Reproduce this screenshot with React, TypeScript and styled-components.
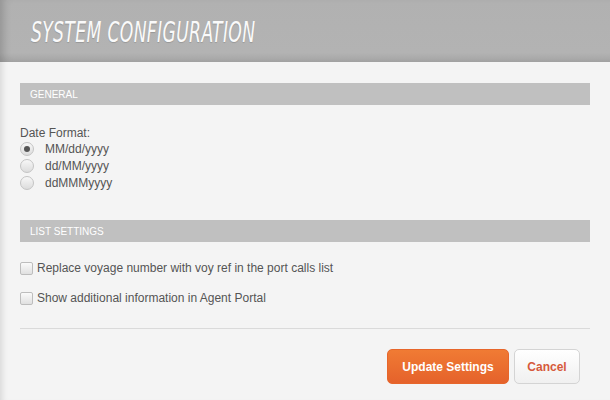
import React, { useState } from 'react';
import styled, { createGlobalStyle } from 'styled-components';

const GlobalStyle = createGlobalStyle`
  html, body {
    margin: 0;
    padding: 0;
    background: #f4f4f4;
  }
  body {
    font-family: "Liberation Sans", Arial, sans-serif;
  }
`;

const Page = styled.div`
  width: 610px;
  height: 400px;
  background: #f4f4f4;
  box-shadow: inset 7px 0 6px -5px rgba(0, 0, 0, 0.12);
  overflow: hidden;
`;

const Header = styled.div`
  height: 62px;
  background: linear-gradient(to bottom, #b1b1b1 0%, #b3b3b3 85%, #a4a4a4 100%);
  box-shadow: inset 8px 0 8px -5px rgba(0, 0, 0, 0.18);
  display: flex;
  align-items: center;
  padding-left: 31px;
  box-sizing: border-box;
`;

const Title = styled.h1`
  margin: 0;
  font-family: "DejaVu Sans Condensed", "Liberation Sans", sans-serif;
  font-style: italic;
  font-weight: normal;
  font-size: 29px;
  letter-spacing: 0.5px;
  color: #fafafa;
  text-shadow: 0 1px 1px rgba(0, 0, 0, 0.15);
  transform: scaleX(0.66);
  transform-origin: left center;
  white-space: nowrap;
  margin-top: 2px;
`;

const Content = styled.div`
  padding: 21px 20px 0 20px;
`;

const SectionBar = styled.div`
  height: 22px;
  background: #c0c0c0;
  color: #fff;
  font-size: 10px;
  text-transform: uppercase;
  display: flex;
  align-items: center;
  padding-left: 10px;
`;

const FieldLabel = styled.div`
  margin-top: 21px;
  font-size: 12px;
  color: #555;
  line-height: 14px;
`;

const RadioList = styled.div`
  display: flex;
  flex-direction: column;
  gap: 3px;
  margin-top: 2px;
`;

const OptionRow = styled.label`
  display: flex;
  align-items: center;
  height: 14px;
  font-size: 12px;
  color: #555;
  cursor: pointer;
`;

const RadioDot = styled.span<{ checked: boolean }>`
  width: 12px;
  height: 12px;
  border-radius: 50%;
  border: 1px solid #c4c4c4;
  background: linear-gradient(to bottom, #f7f7f7, #dcdcdc);
  margin: 0 11px 0 0;
  display: flex;
  align-items: center;
  justify-content: center;
  flex-shrink: 0;

  &::after {
    content: '';
    width: 6px;
    height: 6px;
    border-radius: 50%;
    background: #555;
    display: ${p => (p.checked ? 'block' : 'none')};
  }
`;

const ListSection = styled.div`
  margin-top: 30px;
`;

const CheckRow = styled.label`
  display: flex;
  align-items: center;
  font-size: 12px;
  color: #555;
  height: 14px;
  margin-top: 16px;
  cursor: pointer;

  &:first-of-type {
    margin-top: 19px;
  }
`;

const CheckBox = styled.span<{ checked: boolean }>`
  width: 11px;
  height: 11px;
  border: 1px solid #bdbdbd;
  border-radius: 2px;
  background: linear-gradient(to bottom, #fafafa, #e0e0e0);
  margin-right: 4px;
  flex-shrink: 0;
  display: flex;
  align-items: center;
  justify-content: center;
  font-size: 10px;
  color: #555;
`;

const Divider = styled.hr`
  border: none;
  border-top: 1px solid #dadada;
  margin: 23px 0 0 0;
`;

const Actions = styled.div`
  display: flex;
  justify-content: flex-end;
  gap: 5px;
  margin-top: 20px;
  padding-right: 10px;
`;

const Button = styled.button<{ primary?: boolean }>`
  height: 35px;
  border-radius: 5px;
  font-family: "Liberation Sans", Arial, sans-serif;
  font-size: 12px;
  font-weight: bold;
  cursor: pointer;
  padding: 0;
  width: ${p => (p.primary ? '122px' : '66px')};
  color: ${p => (p.primary ? '#fff' : '#d65a3c')};
  border: 1px solid ${p => (p.primary ? '#e7662b' : '#d4d4d4')};
  background: ${p =>
    p.primary
      ? 'linear-gradient(to bottom, #f07b34, #e5622b)'
      : 'linear-gradient(to bottom, #ffffff, #f0f0f0)'};
`;

const formats = ['MM/dd/yyyy', 'dd/MM/yyyy', 'ddMMMyyyy'];

const App: React.FC = () => {
  const [format, setFormat] = useState(0);
  const [useVoyRef, setUseVoyRef] = useState(false);
  const [showExtra, setShowExtra] = useState(false);

  return (
    <>
      <GlobalStyle />
      <Page>
        <Header>
          <Title>SYSTEM CONFIGURATION</Title>
        </Header>
        <Content>
          <SectionBar>General</SectionBar>
          <FieldLabel>Date Format:</FieldLabel>
          <RadioList>
            {formats.map((f, i) => (
              <OptionRow key={f} onClick={() => setFormat(i)}>
                <RadioDot checked={format === i} />
                {f}
              </OptionRow>
            ))}
          </RadioList>

          <ListSection>
            <SectionBar>List Settings</SectionBar>
            <CheckRow onClick={() => setUseVoyRef(!useVoyRef)}>
              <CheckBox checked={useVoyRef}>{useVoyRef ? '✓' : ''}</CheckBox>
              Replace voyage number with voy ref in the port calls list
            </CheckRow>
            <CheckRow onClick={() => setShowExtra(!showExtra)}>
              <CheckBox checked={showExtra}>{showExtra ? '✓' : ''}</CheckBox>
              Show additional information in Agent Portal
            </CheckRow>
          </ListSection>

          <Divider />
          <Actions>
            <Button primary>Update Settings</Button>
            <Button>Cancel</Button>
          </Actions>
        </Content>
      </Page>
    </>
  );
};

export default App;
